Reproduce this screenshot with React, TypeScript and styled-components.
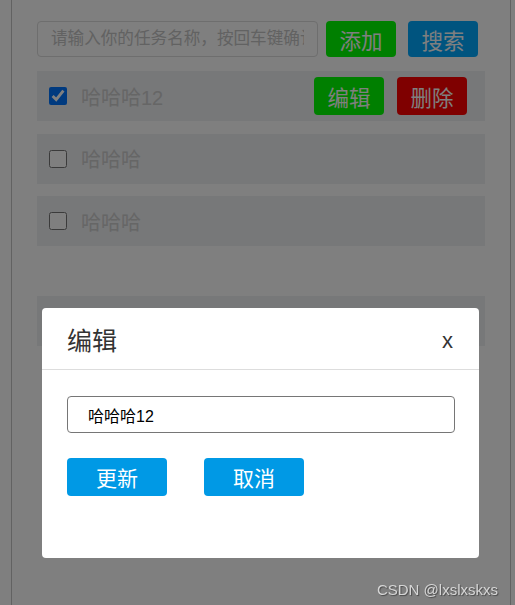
import React from "react";
import styled, { createGlobalStyle } from "styled-components";

const GlobalStyle = createGlobalStyle`
  html, body { margin: 0; padding: 0; background: #fff; }
  body {
    font-family: "Liberation Sans", "Noto Sans CJK SC", sans-serif;
    height: 605px;
    overflow: hidden;
  }
  * { box-sizing: border-box; }
`;

const Page = styled.div`
  margin-left: 11px;
  width: 500px;
  min-height: 605px;
  border-left: 1px solid #c4c4c4;
  border-right: 1px solid #c4c4c4;
  padding: 21px 25px 0;
`;

const TopBar = styled.div`
  display: flex;
  align-items: center;
  height: 36px;
  margin-bottom: 14px;
`;

const TaskInput = styled.input`
  width: 281px;
  height: 36px;
  border: 1px solid #dcdcdc;
  border-radius: 4px;
  padding: 0 13px;
  font-family: inherit;
  font-size: 16.6px;
  outline: none;
  &::placeholder { color: #c4c4c4; }
`;

const ActionButton = styled.button<{ $bg: string; $ml?: number; $h?: number }>`
  width: 70px;
  height: ${(p) => p.$h ?? 36}px;
  margin-left: ${(p) => p.$ml ?? 0}px;
  border: none;
  border-radius: 4px;
  background: ${(p) => p.$bg};
  color: #fff;
  font-family: inherit;
  font-size: 21.5px;
  padding: 0;
  cursor: pointer;
`;

const List = styled.div`
  display: flex;
  flex-direction: column;
  gap: 12.5px;
`;

const Row = styled.div`
  height: 50px;
  background: #eef0f3;
  display: flex;
  align-items: center;
  padding: 0 18px 0 12px;
`;

const Check = styled.input`
  width: 18px;
  height: 18px;
  margin: 0;
`;

const ItemText = styled.span`
  flex: 1;
  margin-left: 14px;
  font-size: 20px;
  color: #cccccc;
`;

const Footer = styled.div`
  margin-top: 50px;
  height: 50px;
  background: #eef0f3;
`;

const Overlay = styled.div`
  position: fixed;
  inset: 0;
  background: rgba(0, 0, 0, 0.5);
`;

const Modal = styled.div`
  position: absolute;
  left: 42px;
  top: 308px;
  width: 437px;
  height: 250px;
  background: #fff;
  border-radius: 4px;
`;

const ModalHeader = styled.div`
  height: 62px;
  display: flex;
  align-items: center;
  justify-content: space-between;
  padding: 0 26px 0 25px;
  border-bottom: 1px solid #dddddd;
`;

const ModalTitle = styled.span`
  font-size: 25px;
  color: #333;
`;

const Close = styled.span`
  font-size: 22px;
  color: #333;
  margin-top: 4px;
  cursor: pointer;
`;

const ModalBody = styled.div`
  padding: 26px 24px 0 25px;
`;

const EditInput = styled.input`
  display: block;
  width: 388px;
  height: 37px;
  border: 1px solid #767676;
  border-radius: 4px;
  padding: 0 20px;
  font-family: inherit;
  font-size: 16px;
  color: #000;
  outline: none;
`;

const ButtonRow = styled.div`
  display: flex;
  gap: 37px;
  margin-top: 25px;
`;

const ModalButton = styled.button`
  width: 100px;
  height: 38px;
  border: none;
  border-radius: 4px;
  background: #0099e5;
  color: #fff;
  font-family: inherit;
  font-size: 21px;
  padding: 0;
  cursor: pointer;
`;

const Watermark = styled.div`
  position: fixed;
  right: 17px;
  bottom: 7px;
  font-family: "Liberation Sans", Arial, sans-serif;
  font-size: 15px;
  color: #d6d6d6;
  text-shadow: 1px 1px 1px #4a4a4a;
`;

const tasks = [
  { name: "哈哈哈12", done: true, hover: true },
  { name: "哈哈哈", done: false, hover: false },
  { name: "哈哈哈", done: false, hover: false },
];

export default function App() {
  return (
    <>
      <GlobalStyle />
      <Page>
        <TopBar>
          <TaskInput placeholder="请输入你的任务名称，按回车键确认" />
          <ActionButton $bg="#00ff00" $ml={8}>添加</ActionButton>
          <ActionButton $bg="#00a8ff" $ml={12}>搜索</ActionButton>
        </TopBar>
        <List>
          {tasks.map((t, i) => (
            <Row key={i}>
              <Check type="checkbox" defaultChecked={t.done} />
              <ItemText>{t.name}</ItemText>
              {t.hover && (
                <>
                  <ActionButton $bg="#00ff00" $h={38}>编辑</ActionButton>
                  <ActionButton $bg="#ff0000" $h={38} $ml={13}>删除</ActionButton>
                </>
              )}
            </Row>
          ))}
        </List>
        <Footer />
      </Page>
      <Overlay>
        <Modal>
          <ModalHeader>
            <ModalTitle>编辑</ModalTitle>
            <Close>x</Close>
          </ModalHeader>
          <ModalBody>
            <EditInput defaultValue="哈哈哈12" />
            <ButtonRow>
              <ModalButton>更新</ModalButton>
              <ModalButton>取消</ModalButton>
            </ButtonRow>
          </ModalBody>
        </Modal>
      </Overlay>
      <Watermark>CSDN @lxslxskxs</Watermark>
    </>
  );
}
